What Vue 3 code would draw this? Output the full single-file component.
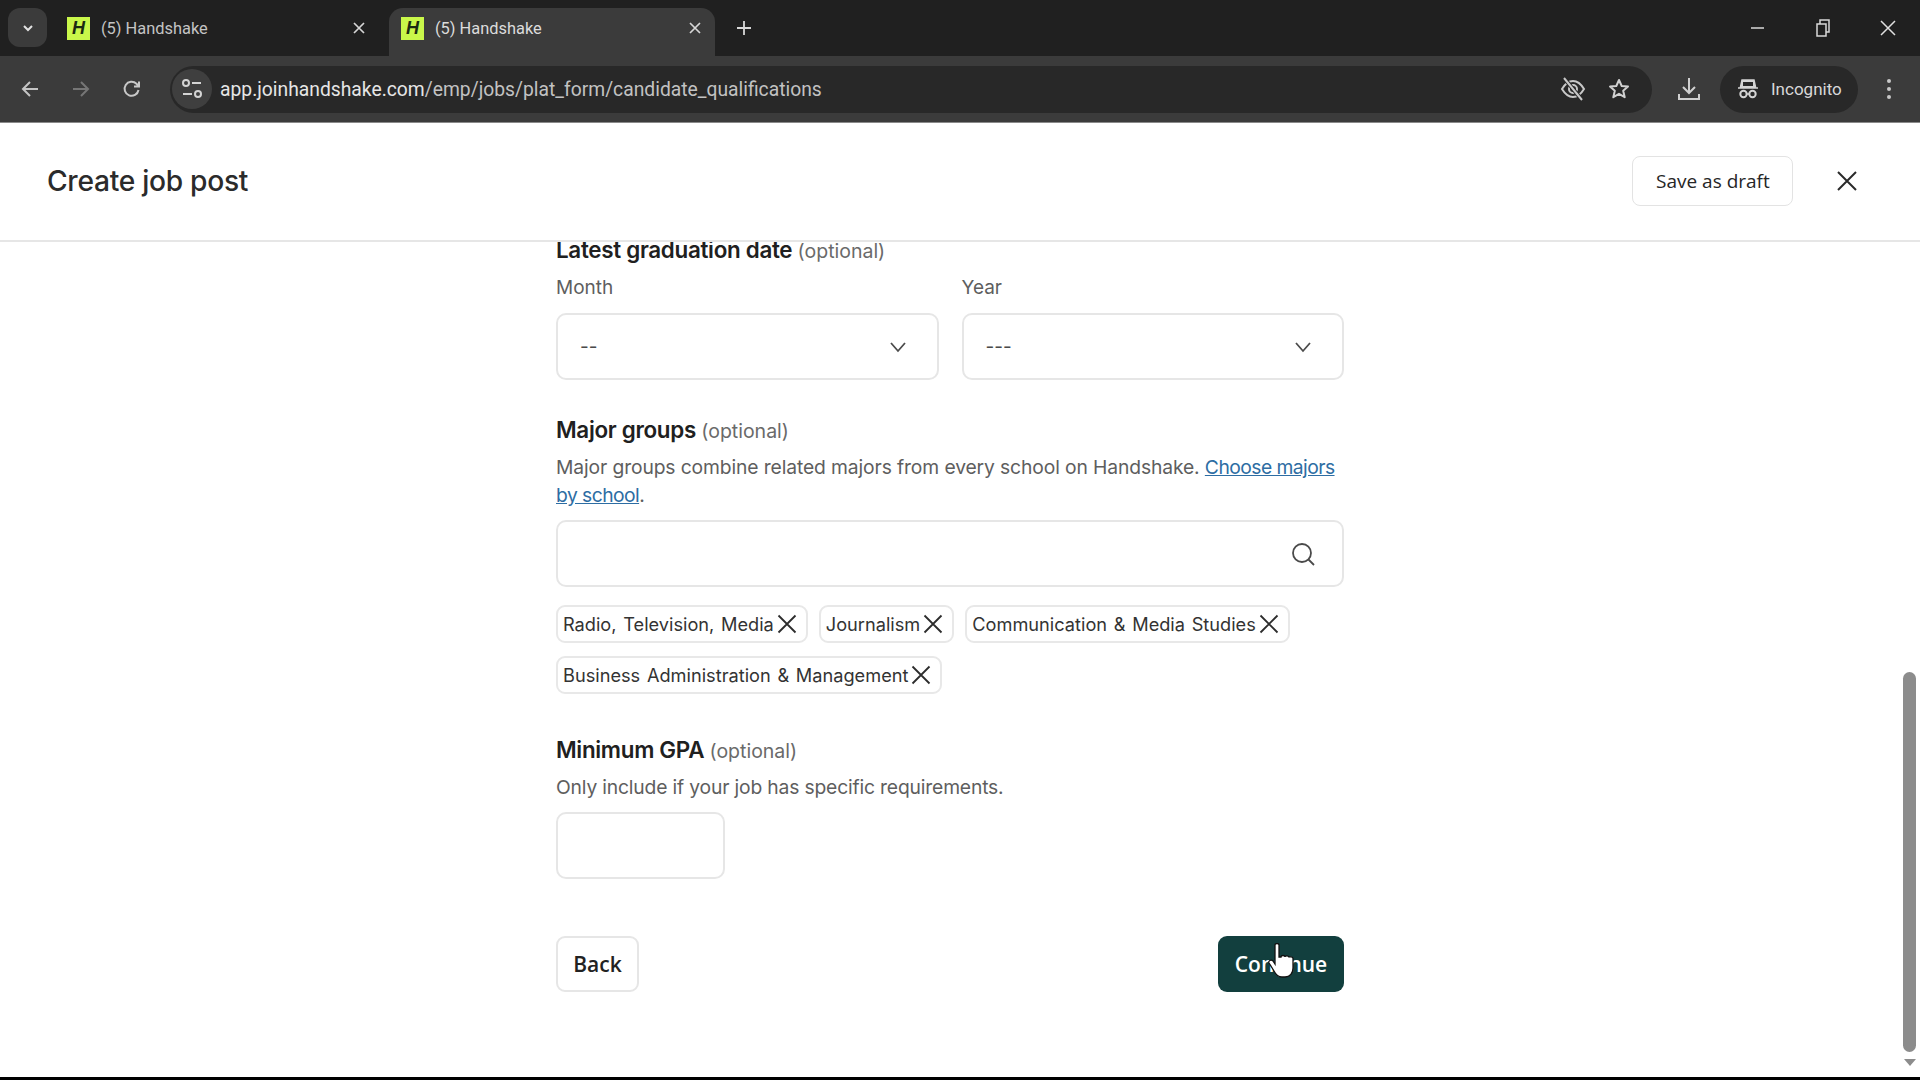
<script setup>
const tags = [
  ['Radio, Television, Media', 'Journalism', 'Communication & Media Studies'],
  ['Business Administration & Management'],
]
const tabs = [
  { id: 1, active: false },
  { id: 2, active: true },
]
</script>

<template>
  <div class="screen">
    <div class="tabbar">
      <button class="tablist">
        <svg width="14" height="14" viewBox="0 0 14 14"><path d="M3 5l4 4 4-4" fill="none" stroke="#e2e2e2" stroke-width="2" /></svg>
      </button>
      <div v-for="t in tabs" :key="t.id" class="tab" :class="{ active: t.active }">
        <span class="favicon">H</span>
        <span class="tabtitle">(5) Handshake</span>
        <svg class="tabclose" width="14" height="14" viewBox="0 0 14 14"><path d="M2 2l10 10M12 2L2 12" stroke="#d6d6d6" stroke-width="1.7" /></svg>
      </div>
      <svg class="plus" width="16" height="16" viewBox="0 0 16 16"><path d="M8 1v14M1 8h14" stroke="#d8d8d8" stroke-width="1.8" /></svg>
      <div class="winctl">
        <svg width="16" height="16" viewBox="0 0 16 16"><path d="M1 8h13" stroke="#d8d8d8" stroke-width="1.5" /></svg>
        <svg width="16" height="18" viewBox="0 0 16 18"><path d="M2 5h9v12H2zM5 5V1h9v12h-3" fill="none" stroke="#d8d8d8" stroke-width="1.5" /></svg>
        <svg width="16" height="16" viewBox="0 0 16 16"><path d="M1 1l14 14M15 1L1 15" stroke="#e0e0e0" stroke-width="1.5" /></svg>
      </div>
    </div>

    <div class="toolbar">
      <div class="nav">
        <svg width="20" height="20" viewBox="0 0 20 20"><path d="M18 10H3M10 3l-7 7 7 7" fill="none" stroke="#c4c4c4" stroke-width="2" /></svg>
        <svg width="20" height="20" viewBox="0 0 20 20"><path d="M2 10h15M10 3l7 7-7 7" fill="none" stroke="#767676" stroke-width="2" /></svg>
        <svg width="20" height="20" viewBox="0 0 20 20"><path d="M16.5 11a7 7 0 1 1-2-6.2L17 7.5M17 2.5v5h-5" fill="none" stroke="#c8c8c8" stroke-width="2" /></svg>
      </div>
      <div class="omnibox">
        <span class="tune">
          <svg width="24" height="22" viewBox="0 0 24 22"><circle cx="6" cy="5" r="3" fill="none" stroke="#d4d4d4" stroke-width="2" /><path d="M12 5h9M3 16h9" stroke="#d4d4d4" stroke-width="2" /><circle cx="18" cy="16" r="3" fill="none" stroke="#d4d4d4" stroke-width="2" /></svg>
        </span>
        <span class="url"><span class="host">app.joinhandshake.com</span>/emp/jobs/plat_form/candidate_qualifications</span>
        <span class="omni-icons">
          <svg width="26" height="24" viewBox="0 0 26 24"><path d="M2 12c3-5 7-8 11-8s8 3 11 8c-3 5-7 8-11 8s-8-3-11-8z" fill="none" stroke="#c8c8c8" stroke-width="2" /><circle cx="13" cy="12" r="4" fill="none" stroke="#c8c8c8" stroke-width="2" /><path d="M4 1l18 22" stroke="#282828" stroke-width="4" /><path d="M4 1l18 22" stroke="#c8c8c8" stroke-width="2" /></svg>
          <svg width="22" height="22" viewBox="0 0 22 22"><path d="M11 2l2.7 6 6.3.6-4.8 4.2 1.500 6.400L11 15.800l-5.700 3.400 1.500-6.400L2 8.600 8.300 8z" fill="none" stroke="#d0d0d0" stroke-width="2" stroke-linejoin="round" /></svg>
        </span>
      </div>
      <svg class="dl" width="24" height="24" viewBox="0 0 24 24"><path d="M12 1v14M6 10l6 6 6-6M2 17v5h20v-5" fill="none" stroke="#d0d0d0" stroke-width="2" /></svg>
      <div class="incog">
        <svg width="22" height="22" viewBox="0 0 22 22"><path d="M5 2h12l1.500 7h-15zM1 10h20" fill="#d4d4d4" stroke="#d4d4d4" stroke-width="1.500" /><path d="M6 4v4h10V4z" fill="#282828" /><circle cx="6.500" cy="16" r="3.200" fill="none" stroke="#d4d4d4" stroke-width="2" /><circle cx="15.500" cy="16" r="3.200" fill="none" stroke="#d4d4d4" stroke-width="2" /><path d="M9.500 16h3" stroke="#d4d4d4" stroke-width="1.500" /></svg>
        <span>Incognito</span>
      </div>
      <svg class="dots" width="6" height="22" viewBox="0 0 6 22"><circle cx="3" cy="3" r="2" fill="#c8c8c8" /><circle cx="3" cy="11" r="2" fill="#c8c8c8" /><circle cx="3" cy="19" r="2" fill="#c8c8c8" /></svg>
    </div>

    <header class="pagehead">
      <h1>Create job post</h1>
      <button class="draft">Save as draft</button>
      <svg class="headclose" width="20" height="20" viewBox="0 0 20 20"><path d="M1 1l18 18M19 1L1 19" stroke="#2a2a2a" stroke-width="2" /></svg>
    </header>

    <main class="content">
      <div class="form">
        <h2 class="title first">Latest graduation date <span class="opt">(optional)</span></h2>
        <div class="dates">
          <div class="field">
            <label class="sublabel">Month</label>
            <div class="box select">
              <span>--</span>
              <svg width="18" height="12" viewBox="0 0 18 12"><path d="M2 2l7 8 7-8" fill="none" stroke="#4b4b4b" stroke-width="1.800" /></svg>
            </div>
          </div>
          <div class="field">
            <label class="sublabel">Year</label>
            <div class="box select">
              <span>---</span>
              <svg width="18" height="12" viewBox="0 0 18 12"><path d="M2 2l7 8 7-8" fill="none" stroke="#4b4b4b" stroke-width="1.800" /></svg>
            </div>
          </div>
        </div>

        <h2 class="title major">Major groups <span class="opt">(optional)</span></h2>
        <p class="desc">Major groups combine related majors from every school on Handshake. <a>Choose majors by school</a>.</p>
        <div class="box search">
          <svg width="26" height="26" viewBox="0 0 26 26"><circle cx="12" cy="12" r="9" fill="none" stroke="#4a4a4a" stroke-width="1.800" /><path d="M18.500 18.500L24 24" stroke="#4a4a4a" stroke-width="1.800" /></svg>
        </div>
        <div class="tags">
          <div v-for="(row, i) in tags" :key="i" class="tagrow">
            <span v-for="tag in row" :key="tag" class="tag">
              {{ tag }}
              <svg width="20" height="20" viewBox="0 0 20 20"><path d="M1.500 1.500l17 17M18.500 1.500l-17 17" stroke="#2c2c2c" stroke-width="1.800" /></svg>
            </span>
          </div>
        </div>

        <h2 class="title gpa">Minimum GPA <span class="opt">(optional)</span></h2>
        <p class="desc single">Only include if your job has specific requirements.</p>
        <div class="box gpainput"></div>

        <div class="actions">
          <button class="back">Back</button>
          <button class="continue">
            Continue
            <svg class="cursor" width="30" height="36" viewBox="0 0 30 36"><path d="M8 2c0-2 4-2 4 0v12l2 0c0-2 4-2 4 0 0-1.500 4-1.500 4 .5 0-1 4-1 4 1V25c0 5-3 9-8 9h-3c-4 0-6-2-8-6l-5-8c-1-2 2-4 4-2l2 3z" fill="#fff" stroke="#111" stroke-width="1.300" /></svg>
          </button>
        </div>
      </div>
      <div class="scrolltrack">
        <div class="scrollthumb"></div>
        <span class="scrollarrow"></span>
      </div>
    </main>
    <div class="bottomstrip"></div>
  </div>
</template>

<style>
html, body { margin: 0; background: #fff; }
</style>

<style scoped>
* { box-sizing: border-box; }
.screen { width: 1920px; height: 1080px; display: flex; flex-direction: column; overflow: hidden; font-family: Inter, "Liberation Sans", sans-serif; background: #fff; }

.tabbar { height: 56px; background: #202020; display: flex; align-items: flex-start; position: relative; padding: 8px 8px 0; flex: none; }
.tablist { width: 39px; height: 39px; border: 0; border-radius: 12px; background: #3b3b3b; display: flex; align-items: center; justify-content: center; padding: 0; margin-right: 11px; }
.tab { width: 335px; height: 48px; display: flex; align-items: center; padding: 0 27px 8px 9px; border-radius: 14px 14px 0 0; color: #c4c4c4; }
.tab.active { background: #3b3b3b; color: #dcdcdc; width: 326px; padding: 0 13px 8px 12px; margin-left: -4px; }
.favicon { width: 23px; height: 23px; background: #c9f74a; color: #1b2a12; font: italic 700 18px/23px "Liberation Sans", sans-serif; text-align: center; flex: none; }
.tabtitle { margin-left: 11px; font-size: 16.400px; font-family: Roboto, sans-serif; flex: 1; white-space: nowrap; }
.tabclose { flex: none; }
.plus { margin: 12px 0 0 21px; }
.winctl { margin-left: auto; display: flex; align-items: center; gap: 49px; height: 40px; padding-right: 16px; }

.toolbar { height: 67px; background: #3b3b3b; display: flex; align-items: center; flex: none; padding: 0 0 0 20px; border-bottom: 1px solid #8a8a8a; }
.nav { display: flex; align-items: center; gap: 31px; width: 150px; }
.omnibox { width: 1482px; height: 47px; background: #282828; border-radius: 24px; display: flex; align-items: center; color: #c2c2c2; }
.tune { width: 40px; height: 40px; margin-left: 2px; border-radius: 50%; background: #3f3f3f; display: flex; align-items: center; justify-content: center; flex: none; }
.url { margin-left: 8px; font: 400 19.300px Roboto, sans-serif; white-space: nowrap; }
.host { color: #e6e6e6; }
.omni-icons { margin-left: auto; display: flex; align-items: center; gap: 22px; padding-right: 22px; }
.dl { margin-left: 25px; }
.incog { margin-left: 19px; width: 138px; height: 47px; border-radius: 24px; background: #282828; display: flex; align-items: center; gap: 12px; padding-left: 17px; color: #d8d8d8; font: 400 17px Roboto, sans-serif; }
.dots { margin-left: 28px; }

.pagehead { height: 119px; flex: none; display: flex; align-items: center; border-bottom: 2px solid #e6e6e6; padding: 0 63px 2px 47px; background: #fff; }
.pagehead h1 { margin: 0; font-size: 28.200px; font-weight: 500; color: #2b2b2b; letter-spacing: -0.300px; }
.draft { margin-left: auto; width: 161px; height: 50px; border: 1px solid #e3e3e3; border-radius: 8px; background: #fff; font: 500 19px "Open Sans", sans-serif; color: #262626; padding: 0; }
.headclose { margin-left: 43.600px; }

.content { flex: 1; min-height: 0; overflow: hidden; position: relative; padding-left: 556px; }
.form { width: 788px; }
.title { margin: 0; font-size: 22.400px; line-height: 28px; font-weight: 600; color: #202020; letter-spacing: -0.300px; }
.title.first { line-height: 16px; }
.opt { font-size: 19.500px; font-weight: 400; color: #6a6a6a; letter-spacing: 0; }
.dates { display: flex; gap: 23px; margin-top: 15px; }
.field { flex: 1; }
.sublabel { display: block; font-size: 19px; line-height: 28px; color: #5e5e5e; }
.box { border: 2px solid #e6e6e6; border-radius: 10px; background: #fff; height: 67px; }
.select { margin-top: 11px; display: flex; align-items: center; justify-content: space-between; padding: 0 30px 0 22px; color: #4a4a4a; font-size: 19px; }
.title.major { margin-top: 36px; }
.desc { margin: 8px 0 0; font-size: 19.300px; line-height: 28px; color: #5e5e5e; letter-spacing: -0.120px; }
.desc a { color: #2d6da3; text-decoration: underline; letter-spacing: -0.550px; }
.search { margin-top: 11px; display: flex; align-items: center; justify-content: flex-end; padding-right: 26px; }
.tags { margin-top: 18px; display: flex; flex-direction: column; gap: 13px; }
.tagrow { display: flex; gap: 11px; }
.tag { height: 38px; border: 2px solid #e8e8e8; border-radius: 9px; display: inline-flex; align-items: center; gap: 3px; padding: 0 9px 0 5px; font-size: 18.200px; word-spacing: 1.600px; color: #333; white-space: nowrap; }
.title.gpa { margin-top: 42px; }
.desc.single { margin-top: 8px; letter-spacing: -0.170px; }
.gpainput { width: 169px; margin-top: 11px; }
.actions { display: flex; justify-content: space-between; margin-top: 57px; }
.actions button { height: 56px; border-radius: 9px; font: 600 21px "Open Sans", sans-serif; padding: 0; }
.back { width: 83px; background: #fff; border: 2px solid #e6e6e6; color: #222; }
.continue { width: 126px; background: #123f3e; border: 0; color: #fff; position: relative; }
.cursor { position: absolute; left: 49px; top: 7px; }

.scrolltrack { position: absolute; right: 4px; top: 430px; width: 13px; }
.scrollthumb { width: 13px; height: 380px; background: #8c8c8c; border-radius: 7px; }
.scrollarrow { display: block; width: 0; margin: 7px auto 0; border-left: 6px solid transparent; border-right: 6px solid transparent; border-top: 7px solid #8c8c8c; }
.bottomstrip { height: 3px; background: #000; flex: none; }
</style>
